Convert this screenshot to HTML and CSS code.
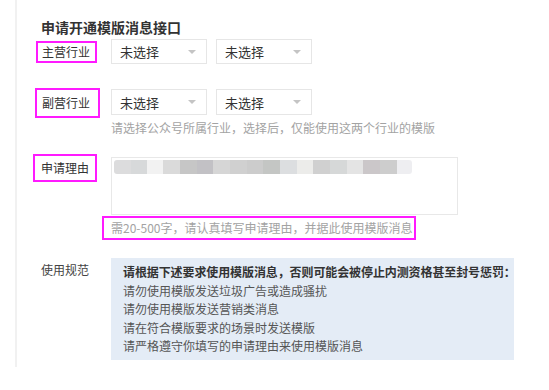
FILE: index.html
```html
<!DOCTYPE html>
<html lang="zh-CN">
<head>
    <meta charset="UTF-8">
    <title>申请开通模版消息接口</title>
    <link rel="stylesheet" href="styles.css">
</head>
<body>
    <div class="layout">
        <div class="rail"></div>

        <div class="main">
            <h2 class="title">申请开通模版消息接口</h2>

            <div class="field row1">
                <div class="field-label"><span class="mark mark1">主营行业</span></div>
                <div class="field-body selects">
                    <div class="select"><span>未选择</span><i class="arrow"></i></div>
                    <div class="select"><span>未选择</span><i class="arrow"></i></div>
                </div>
            </div>

            <div class="field row2">
                <div class="field-label"><span class="mark mark2">副营行业</span></div>
                <div class="field-body">
                    <div class="selects">
                        <div class="select"><span>未选择</span><i class="arrow"></i></div>
                        <div class="select"><span>未选择</span><i class="arrow"></i></div>
                    </div>
                    <p class="hint hint1">请选择公众号所属行业，选择后，仅能使用这两个行业的模版</p>
                </div>
            </div>

            <div class="field row3">
                <div class="field-label"><span class="mark mark3">申请理由</span></div>
                <div class="field-body">
                    <div class="textarea"><div class="blurred"></div></div>
                    <p class="hint mark hint2">需20-500字，请认真填写申请理由，并据此使用模版消息</p>
                </div>
            </div>

            <div class="field row4">
                <div class="field-label plain">使用规范</div>
                <div class="field-body">
                    <div class="rules">
                        <p class="rules-head">请根据下述要求使用模版消息，否则可能会被停止内测资格甚至封号惩罚：</p>
                        <p>请勿使用模版发送垃圾广告或造成骚扰</p>
                        <p>请勿使用模版发送营销类消息</p>
                        <p>请在符合模版要求的场景时发送模版</p>
                        <p>请严格遵守你填写的申请理由来使用模版消息</p>
                    </div>
                </div>
            </div>
        </div>
    </div>
</body>
</html>
```

FILE: styles.css
```css
body {
    margin: 0;
    padding: 0;
    background-color: #fff;
    color: #333;
    font-family: "Noto Sans CJK SC", "Microsoft YaHei", sans-serif;
    font-size: 12px;
}

p {
    margin: 0;
}

.layout {
    display: flex;
    align-items: flex-start;
}

.rail {
    width: 15px;
    height: 367px;
    border-right: 2px solid #f1f1f1;
    flex: none;
}

.main {
    padding: 17px 0 0 24px;
}

.title {
    margin: 0 0 2px;
    font-size: 14px;
    line-height: 20px;
    font-weight: bold;
    color: #333;
}

.field {
    display: flex;
}

.field-label {
    width: 70px;
    flex: none;
}

.field-body {
    flex: none;
}

/* magenta annotation boxes */
.mark {
    display: inline-block;
    border: 2px solid #ff1aff;
}

.mark1 {
    margin-left: -5px;
    padding: 0 5px 0 4px;
    line-height: 18px;
}

.mark2 {
    margin-left: -6px;
    padding: 0 8px 0 5px;
    line-height: 26px;
}

.mark3 {
    margin-left: -8px;
    padding: 0 6px;
    line-height: 24px;
}

.row1 {
    align-items: center;
}

.row2 {
    margin-top: 24px;
}

.row3 {
    margin-top: 18px;
}

.row4 {
    margin-top: 18px;
}

.selects {
    display: flex;
    gap: 9px;
}

.row2 .selects {
    margin-top: 1px;
}

.select {
    width: 96px;
    height: 25px;
    box-sizing: border-box;
    border: 1px solid #e6e6e6;
    background-color: #fff;
    display: flex;
    align-items: center;
    justify-content: space-between;
    padding: 0 10px 0 8px;
    font-size: 13px;
    color: #333;
}

.row2 .select {
    height: 26px;
}

.arrow {
    width: 0;
    height: 0;
    border-left: 4px solid transparent;
    border-right: 4px solid transparent;
    border-top: 4px solid #c4c4c4;
}

.hint {
    color: #a3a3a3;
    line-height: 16px;
}

.hint1 {
    margin-top: 5px;
}

.textarea {
    margin-top: 3px;
    width: 347px;
    height: 58px;
    box-sizing: border-box;
    border: 1px solid #e8e8e8;
    padding: 2px;
}

.blurred {
    width: 298px;
    height: 14px;
    border-radius: 3px;
    filter: blur(0.4px);
    background: linear-gradient(to right,
        #dcdcdd 0 17px, #d7d9da 17px 33px, #f2f2f2 33px 49px,
        #dadada 49px 66px, #c6c6c6 66px 83px, #c2c1c5 83px 99px,
        #d6d6d6 99px 116px, #d0d0d0 116px 133px, #cccccc 133px 149px,
        #c4c6c4 149px 166px, #dcdee0 166px 183px, #ececea 183px 199px,
        #d0d0d0 199px 216px, #d6d8d8 216px 233px, #e4e4e4 233px 249px,
        #cbc7c9 249px 266px, #cdcdcd 266px 283px, #eeeef1 283px 298px);
}

.hint2 {
    margin-top: 1px;
    margin-left: -9px;
    padding: 0 2px 0 7px;
    line-height: 20px;
}

.plain {
    padding-top: 3px;
    line-height: 18px;
    color: #444;
}

.rules {
    width: 403px;
    box-sizing: border-box;
    background-color: #e4ecf6;
    padding: 5px 6px 4px 12px;
    line-height: 18.5px;
    color: #555;
    white-space: nowrap;
}

.rules-head {
    font-weight: bold;
    color: #333;
    letter-spacing: -0.1px;
}
```
